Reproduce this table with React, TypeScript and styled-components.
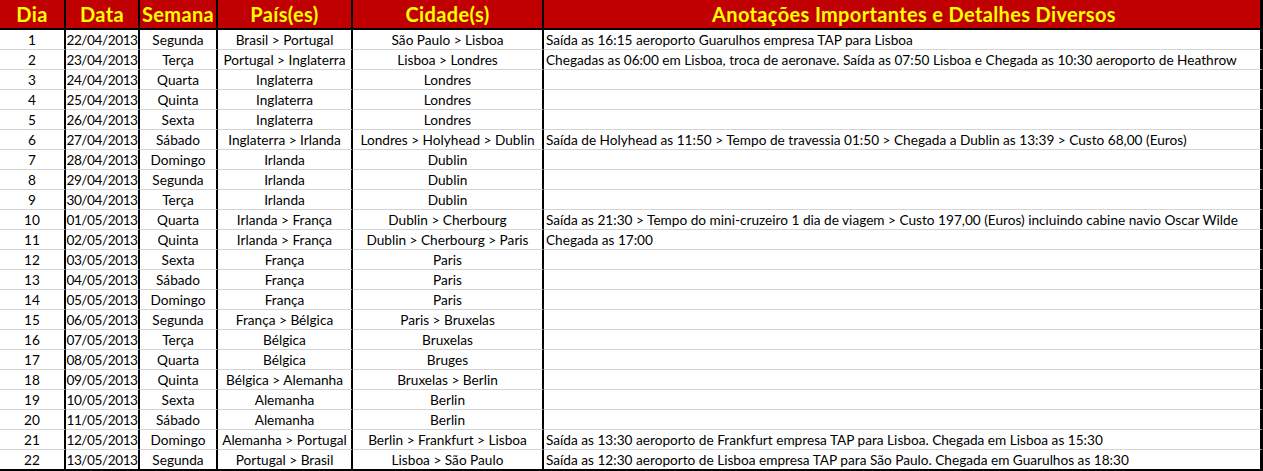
import React from 'react'
import styled, { createGlobalStyle } from 'styled-components'

const GlobalStyle = createGlobalStyle`
  html, body {
    margin: 0;
    padding: 0;
    background: #ffffff;
  }
`

const columns = [
  { title: 'Dia', width: 66, align: 'center' },
  { title: 'Data', width: 74, align: 'center' },
  { title: 'Semana', width: 78, align: 'center' },
  { title: 'País(es)', width: 135, align: 'center' },
  { title: 'Cidade(s)', width: 191, align: 'center' },
  { title: 'Anotações Importantes e Detalhes Diversos', width: 719, align: 'left' }
]

const rows = [
  ['1', '22/04/2013', 'Segunda', 'Brasil > Portugal', 'São Paulo > Lisboa', 'Saída as 16:15 aeroporto Guarulhos empresa TAP para Lisboa'],
  ['2', '23/04/2013', 'Terça', 'Portugal > Inglaterra', 'Lisboa > Londres', 'Chegadas as 06:00 em Lisboa, troca de aeronave. Saída as 07:50 Lisboa e Chegada as 10:30 aeroporto de Heathrow'],
  ['3', '24/04/2013', 'Quarta', 'Inglaterra', 'Londres', ''],
  ['4', '25/04/2013', 'Quinta', 'Inglaterra', 'Londres', ''],
  ['5', '26/04/2013', 'Sexta', 'Inglaterra', 'Londres', ''],
  ['6', '27/04/2013', 'Sábado', 'Inglaterra > Irlanda', 'Londres > Holyhead > Dublin', 'Saída de Holyhead as 11:50 > Tempo de travessia 01:50 > Chegada a Dublin as 13:39 > Custo 68,00 (Euros)'],
  ['7', '28/04/2013', 'Domingo', 'Irlanda', 'Dublin', ''],
  ['8', '29/04/2013', 'Segunda', 'Irlanda', 'Dublin', ''],
  ['9', '30/04/2013', 'Terça', 'Irlanda', 'Dublin', ''],
  ['10', '01/05/2013', 'Quarta', 'Irlanda > França', 'Dublin > Cherbourg', 'Saída as 21:30 > Tempo do mini-cruzeiro 1 dia de viagem > Custo 197,00 (Euros) incluindo cabine navio Oscar Wilde'],
  ['11', '02/05/2013', 'Quinta', 'Irlanda > França', 'Dublin > Cherbourg > Paris', 'Chegada as 17:00'],
  ['12', '03/05/2013', 'Sexta', 'França', 'Paris', ''],
  ['13', '04/05/2013', 'Sábado', 'França', 'Paris', ''],
  ['14', '05/05/2013', 'Domingo', 'França', 'Paris', ''],
  ['15', '06/05/2013', 'Segunda', 'França > Bélgica', 'Paris > Bruxelas', ''],
  ['16', '07/05/2013', 'Terça', 'Bélgica', 'Bruxelas', ''],
  ['17', '08/05/2013', 'Quarta', 'Bélgica', 'Bruges', ''],
  ['18', '09/05/2013', 'Quinta', 'Bélgica > Alemanha', 'Bruxelas > Berlin', ''],
  ['19', '10/05/2013', 'Sexta', 'Alemanha', 'Berlin', ''],
  ['20', '11/05/2013', 'Sábado', 'Alemanha', 'Berlin', ''],
  ['21', '12/05/2013', 'Domingo', 'Alemanha > Portugal', 'Berlin > Frankfurt > Lisboa', 'Saída as 13:30 aeroporto de Frankfurt empresa TAP para Lisboa. Chegada em Lisboa as 15:30'],
  ['22', '13/05/2013', 'Segunda', 'Portugal > Brasil', 'Lisboa > São Paulo', 'Saída as 12:30 aeroporto de Lisboa empresa TAP para São Paulo. Chegada em Guarulhos as 18:30']
]

const App = () => {
  return (
    <>
      <GlobalStyle />
      <Sheet>
        {columns.map((col, i) => (
          <HeaderCell key={col.title} $last={i === columns.length - 1}>
            {col.title}
          </HeaderCell>
        ))}
        {rows.map((row, r) =>
          row.map((value, c) => (
            <Cell
              key={r + '-' + c}
              $align={columns[c].align}
              $tight={c === 1}
              $last={c === columns.length - 1}
              $bottom={r === rows.length - 1}
            >
              {value}
            </Cell>
          ))
        )}
      </Sheet>
    </>
  )
}

const Sheet = styled.div`
  display: grid;
  grid-template-columns: ${columns.map((c) => c.width + 'px').join(' ')};
  width: 1263px;
  font-family: Lato, 'Open Sans', sans-serif;
`

const HeaderCell = styled.div<{ $last?: boolean }>`
  height: 28px;
  background: #c00000;
  color: #ffff00;
  font-weight: 700;
  font-size: 20px;
  letter-spacing: 0.35px;
  display: flex;
  align-items: center;
  justify-content: center;
  padding-left: ${(p) => (p.$last ? '24px' : '0')};
  border-right: ${(p) => (p.$last ? '3px' : '2px')} solid #000;
  border-bottom: 2px solid #000;
  white-space: nowrap;
`

const Cell = styled.div<{ $align: string; $tight?: boolean; $last?: boolean; $bottom?: boolean }>`
  height: 19px;
  display: flex;
  align-items: center;
  justify-content: ${(p) => (p.$align === 'left' ? 'flex-start' : 'center')};
  padding: ${(p) => (p.$tight ? '0' : '0 2px')};
  font-size: 13.65px;
  letter-spacing: ${(p) => (p.$tight ? '-0.45px' : '0')};
  color: #000;
  border-right: ${(p) => (p.$last ? '3px' : '2px')} solid #000;
  border-bottom: ${(p) => (p.$bottom ? '2px solid #000' : '1px solid #d4d4d4')};
  white-space: nowrap;
`

export default App
